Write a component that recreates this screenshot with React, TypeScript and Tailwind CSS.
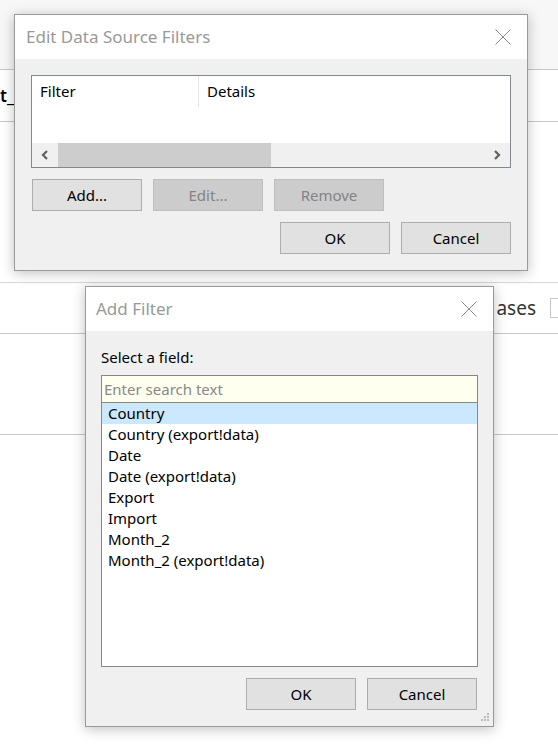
import React from 'react';

const font = 'font-["Noto_Sans","Open_Sans",sans-serif]';

const CloseX = () => (
  <svg width="16" height="16" viewBox="0 0 16 16" className="shrink-0">
    <path d="M0.5 0.5 L15.5 15.5 M15.5 0.5 L0.5 15.5" stroke="#8a8a8a" strokeWidth="1" fill="none" />
  </svg>
);

const Chevron = ({ dir }: { dir: 'left' | 'right' }) => (
  <svg width="8" height="10" viewBox="0 0 8 10">
    <path
      d={dir === 'left' ? 'M6 1 L2 5 L6 9' : 'M2 1 L6 5 L2 9'}
      stroke="#606060"
      strokeWidth="2.2"
      fill="none"
    />
  </svg>
);

const Btn = ({ label, disabled }: { label: string; disabled?: boolean }) => (
  <div
    className={
      disabled
        ? 'w-[110px] h-[32px] flex items-center justify-center border border-[#bfbfbf] bg-[#cccccc] text-[#838383] text-[15px]'
        : 'w-[110px] h-[32px] flex items-center justify-center border border-[#adadad] bg-[#e1e1e1] text-black text-[15px]'
    }
  >
    {label}
  </div>
);

const Grip = () => (
  <svg width="10" height="10" viewBox="0 0 10 10">
    {[
      [7, 0],
      [4, 3],
      [7, 3],
      [1, 6],
      [4, 6],
      [7, 6],
    ].map(([x, y], i) => (
      <rect key={i} x={x} y={y} width="2" height="2" fill="#bcbcbc" />
    ))}
  </svg>
);

const fields = [
  'Country',
  'Country (export!data)',
  'Date',
  'Date (export!data)',
  'Export',
  'Import',
  'Month_2',
  'Month_2 (export!data)',
];

export default function App() {
  return (
    <div className={`relative w-[558px] h-[751px] bg-white overflow-hidden ${font}`}>
      {/* app behind the dialogs */}
      <div className="flex flex-col">
        <div className="h-[69px] bg-[#f7f7f7]" />
        <div className="h-[53px] border-y border-[#c8c8c8] bg-white flex items-center">
          <span className="text-[17px] font-semibold text-black">t_</span>
        </div>
        <div className="h-[161px] border-b border-[#d8d8d8]" />
        <div className="h-[51px] border-b border-[#c8c8c8] flex items-center justify-end gap-[14px]">
          <span className="text-[19px] text-[#333]">ases</span>
          <div className="w-[20px] h-[20px] border border-[#c8c8c8] bg-white -mr-[12px]" />
        </div>
        <div className="h-[101px] border-b border-[#c8c8c8]" />
      </div>

      {/* Edit Data Source Filters */}
      <div className="absolute left-[14px] top-[14px] w-[514px] h-[257px] border border-[#9a9a9a] bg-[#f0f0f0] shadow-[0_2px_12px_rgba(0,0,0,0.25)] flex flex-col">
        <div className="h-[44px] bg-white flex items-center justify-between pl-[11px] pr-[16px]">
          <span className="text-[17px] text-[#999999]">Edit Data Source Filters</span>
          <CloseX />
        </div>
        <div className="flex-1 flex flex-col px-[16px] pt-[16px]">
          <div className="h-[93px] border border-[#828790] bg-white flex flex-col">
            <div className="h-[31px] flex text-[15px] text-black">
              <div className="w-[167px] border-r border-[#e5e5e5] flex items-center pl-[8px]">Filter</div>
              <div className="flex items-center pl-[8px]">Details</div>
            </div>
            <div className="flex-1" />
            <div className="h-[24px] bg-[#f0f0f0] flex items-stretch">
              <div className="w-[26px] flex items-center justify-center">
                <Chevron dir="left" />
              </div>
              <div className="w-[213px] bg-[#cdcdcd]" />
              <div className="flex-1" />
              <div className="w-[26px] flex items-center justify-center">
                <Chevron dir="right" />
              </div>
            </div>
          </div>
          <div className="flex gap-[11px] mt-[11px] pl-[1px]">
            <Btn label="Add..." />
            <Btn label="Edit..." disabled />
            <Btn label="Remove" disabled />
          </div>
          <div className="flex justify-end gap-[11px] mt-[11px]">
            <Btn label="OK" />
            <Btn label="Cancel" />
          </div>
        </div>
      </div>

      {/* Add Filter */}
      <div className="absolute left-[85px] top-[286px] w-[409px] h-[441px] border border-[#9a9a9a] bg-[#f0f0f0] shadow-[0_2px_12px_rgba(0,0,0,0.25)] flex flex-col">
        <div className="h-[44px] bg-white flex items-center justify-between pl-[10px] pr-[16px]">
          <span className="text-[17px] text-[#999999]">Add Filter</span>
          <CloseX />
        </div>
        <div className="flex-1 flex flex-col px-[15px] pt-[15px] relative">
          <div className="text-[15px] text-black leading-[22px]">Select a field:</div>
          <div className="mt-[7px] h-[292px] border border-[#828790] flex flex-col">
            <div className="h-[27px] shrink-0 bg-[#fffff0] border-b border-[#828790] flex items-center pl-[2px] text-[15px] text-[#888888]">
              Enter search text
            </div>
            <div className="flex-1 bg-white flex flex-col text-[15px] text-black">
              {fields.map((f, i) => (
                <div
                  key={f}
                  className={
                    i === 0
                      ? 'h-[21px] flex items-center pl-[6px] bg-[#cce8ff]'
                      : 'h-[21px] flex items-center pl-[6px]'
                  }
                >
                  {f}
                </div>
              ))}
            </div>
          </div>
          <div className="flex justify-end gap-[11px] mt-[11px] pr-[1px]">
            <Btn label="OK" />
            <Btn label="Cancel" />
          </div>
          <div className="absolute right-[3px] bottom-[3px]">
            <Grip />
          </div>
        </div>
      </div>
    </div>
  );
}
